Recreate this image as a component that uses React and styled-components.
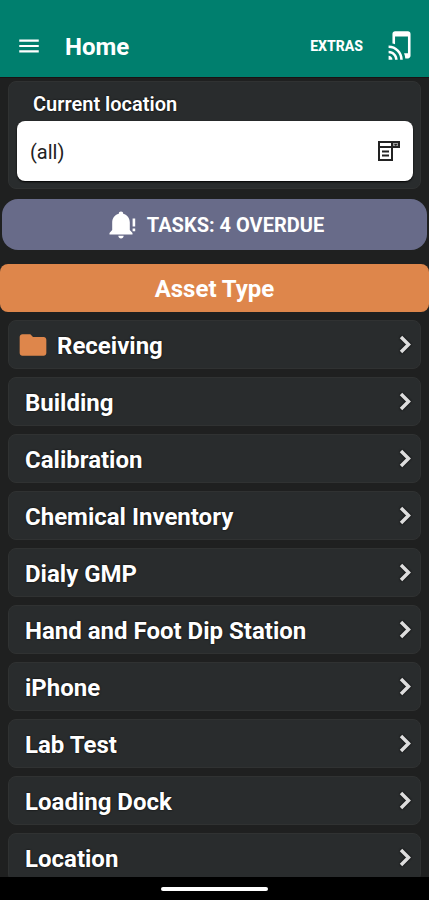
import React from "react";
import styled, { createGlobalStyle, css } from "styled-components";
import { MdMenu, MdTapAndPlay, MdFolder } from "react-icons/md";

const GlobalStyle = createGlobalStyle`
  * {
    box-sizing: border-box;
  }
  body {
    margin: 0;
    background: #1f2020;
    color: #fff;
    font-family: Roboto, "Liberation Sans", sans-serif;
  }
  button, input {
    font-family: inherit;
    color: inherit;
  }
`;

const panel = css`
  background: #292c2d;
  border: 1px solid #303232;
  border-radius: 8px;
`;

const Wrapper = styled.div`
  height: 100vh;
  display: flex;
  flex-direction: column;
`;

const Header = styled.header`
  flex: none;
  height: 78px;
  padding: 14px 12px 0 16px;
  display: flex;
  align-items: center;
  background: #007f6e;
  border-bottom: 1px solid #1a1214;
`;

const PlainButton = styled.button`
  display: flex;
  align-items: center;
  padding: 0;
  border: 0;
  background: none;
  font-size: 14px;
  font-weight: 800;
  cursor: pointer;
`;

const Title = styled.h1`
  flex: 1;
  margin: 0;
  padding: 2px 0 0 23px;
  font-size: 24px;
  line-height: 32px;
  font-weight: 700;
`;

const Actions = styled.div`
  display: flex;
  align-items: center;
  gap: 23px;
`;

const Content = styled.main`
  flex: 1;
  min-height: 0;
  overflow: hidden;
  display: flex;
  flex-direction: column;
`;

const LocationPanel = styled.section`
  ${panel};
  flex: none;
  margin: 3px 8px 10px;
  padding: 10px 7px 7px 8px;
`;

const Label = styled.label`
  display: block;
  padding: 0 16px 5px;
  font-size: 20px;
  line-height: 24px;
  font-weight: 600;
  text-shadow: 0 0 2px #000;
`;

const Field = styled.div`
  height: 60px;
  padding: 0 12px;
  display: flex;
  align-items: center;
  background: #fff;
  color: #222;
  border-radius: 8px;
  box-shadow: 0 1px 2px #000;
`;

const Input = styled.input`
  flex: 1;
  min-width: 0;
  padding: 2px 0 0 1px;
  border: 0;
  outline: 0;
  background: none;
  font-size: 20px;
`;

const TasksButton = styled.button`
  flex: none;
  height: 51px;
  margin: 0 2px;
  padding: 0 0 0 4px;
  display: flex;
  align-items: center;
  justify-content: center;
  gap: 10px;
  border: 0;
  border-radius: 16px;
  background: #686b89;
  font-size: 20px;
  font-weight: 700;
  cursor: pointer;
`;

const SectionTitle = styled.h2`
  flex: none;
  margin: 14px 0 8px;
  padding-top: 2px;
  font-size: 24px;
  line-height: 46px;
  font-weight: 700;
  text-align: center;
  background: #de864b;
  border-radius: 8px;
`;

const List = styled.nav`
  display: flex;
  flex-direction: column;
  gap: 8px;
  padding: 0 8px;
`;

const Row = styled.a`
  ${panel};
  flex: none;
  height: 49px;
  padding: 0 8px 0 ${props => (props.$folder ? "8px" : "16px")};
  display: flex;
  align-items: center;
  gap: 8px;
  color: #fff;
  font-size: 24px;
  font-weight: 700;
  text-decoration: none;
  text-shadow: 0 0 2px #000;
`;

const RowName = styled.span`
  flex: 1;
  padding-top: 2px;
`;

const Chevron = styled.svg`
  filter: drop-shadow(0 0 1px #000);
`;

const BottomBar = styled.footer`
  flex: none;
  height: 23px;
  display: flex;
  align-items: center;
  justify-content: center;
  background: #000;
`;

const Handle = styled.div`
  width: 25%;
  height: 4px;
  border-radius: 2px;
  background: #fff;
`;

const assetTypes = [
  { name: "Receiving", folder: true },
  { name: "Building" },
  { name: "Calibration" },
  { name: "Chemical Inventory" },
  { name: "Dialy GMP" },
  { name: "Hand and Foot Dip Station" },
  { name: "iPhone" },
  { name: "Lab Test" },
  { name: "Loading Dock" },
  { name: "Location" },
];

const BellIcon = () => (
  <svg width="28" height="28" viewBox="0 0 28 28" fill="#fff">
    <path d="M12 0.500C10.600 0.500 9.800 1.400 9.800 2.700C5.500 3.800 3.200 7.200 3.200 11.500V19L0.500 22V23.500H23.500V22L20.800 19V11.500C20.800 7.200 18.500 3.800 14.200 2.700C14.200 1.400 13.400 0.500 12 0.500Z" />
    <path d="M9.300 24.800H14.700C14.500 26.500 13.500 27.500 12 27.500C10.500 27.500 9.500 26.500 9.300 24.800Z" />
    <path d="M23.600 7.500H26.200V15.500H23.600ZM23.600 17.500H26.200V20.200H23.600Z" />
  </svg>
);

const PickIcon = () => (
  <svg width="24" height="22" viewBox="0 0 24 22" fill="none" stroke="#222" strokeWidth="2">
    <path d="M15 2H22V7H15Z" fill="#999" />
    <path d="M15 2H2V20H15V2M2 7H15" />
    <path d="M5 11.500H12M5 15.500H12" />
    <path d="M17 4H20.500L18.700 6Z" fill="#222" stroke="none" />
  </svg>
);

const App = () => (
  <>
    <GlobalStyle />
    <Wrapper>
      <Header>
        <PlainButton aria-label="Menu">
          <MdMenu size={26} />
        </PlainButton>
        <Title>Home</Title>
        <Actions>
          <PlainButton>EXTRAS</PlainButton>
          <PlainButton aria-label="Tap to scan">
            <MdTapAndPlay size={31} />
          </PlainButton>
        </Actions>
      </Header>
      <Content>
        <LocationPanel>
          <Label htmlFor="location">Current location</Label>
          <Field>
            <Input id="location" type="text" defaultValue="(all)" />
            <PlainButton aria-label="Choose location">
              <PickIcon />
            </PlainButton>
          </Field>
        </LocationPanel>
        <TasksButton>
          <BellIcon />
          TASKS: 4 OVERDUE
        </TasksButton>
        <SectionTitle>Asset Type</SectionTitle>
        <List>
          {assetTypes.map(({ name, folder }) => (
            <Row key={name} href="#" $folder={folder}>
              {folder && <MdFolder size={32} color="#de864b" />}
              <RowName>{name}</RowName>
              <Chevron width="14" height="20" viewBox="0 0 14 20" fill="none" stroke="#ddd" strokeWidth="3.500">
                <path d="M3 2L10.500 9.500L3 17" />
              </Chevron>
            </Row>
          ))}
        </List>
      </Content>
      <BottomBar>
        <Handle />
      </BottomBar>
    </Wrapper>
  </>
);

export default App;
